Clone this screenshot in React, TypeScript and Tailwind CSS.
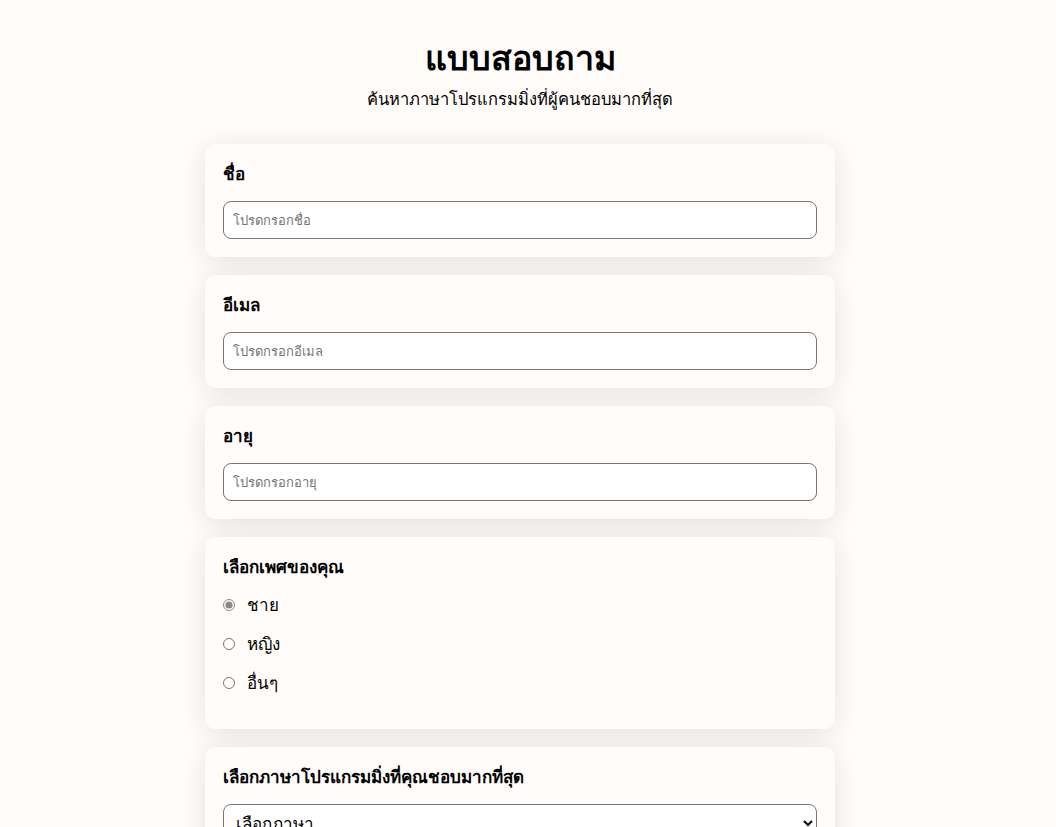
import React from "react";

function Field({ label, placeholder }: { label: string; placeholder: string }) {
  return (
    <div className="rounded-[10px] bg-[#fffcf9] p-[18px] shadow-[0_4px_28px_rgba(0,0,0,0.11)]">
      <label className="block text-[17px] leading-6 font-semibold text-black">{label}</label>
      <input
        type="text"
        placeholder={placeholder}
        className="mt-[15px] block h-[38px] w-full rounded-[8px] border border-[#767676] bg-white px-[9px] text-[13px] text-black placeholder:text-[#757575] outline-none"
      />
    </div>
  );
}

export default function App() {
  return (
    <div className="min-h-screen bg-[#fffcf9] pr-4 font-['Noto_Sans','DejaVu_Sans',sans-serif] text-black">
      <header className="pt-[34px] text-center">
        <h1 className="text-[34px] font-bold leading-[46px]">แบบสอบถาม</h1>
        <p className="mt-[7px] text-[16.5px] leading-6">ค้นหาภาษาโปรแกรมมิ่งที่ผู้คนชอบมากที่สุด</p>
      </header>
      <form className="mx-auto mt-[33px] flex w-[630px] flex-col gap-[18px] pb-10">
        <Field label="ชื่อ" placeholder="โปรดกรอกชื่อ" />
        <Field label="อีเมล" placeholder="โปรดกรอกอีเมล" />
        <Field label="อายุ" placeholder="โปรดกรอกอายุ" />
        <div className="rounded-[10px] bg-[#fffcf9] p-[18px] pb-[34px] shadow-[0_4px_28px_rgba(0,0,0,0.11)]">
          <div className="text-[17px] leading-6 font-semibold">เลือกเพศของคุณ</div>
          {["ชาย", "หญิง", "อื่นๆ"].map((g, i) => (
            <label key={g} className="mt-[15px] flex h-6 items-center text-[17px] first-of-type:mt-[14px]">
              <input
                type="radio"
                name="gender"
                defaultChecked={i === 0}
                className="m-0 h-[12px] w-[12px] accent-[#8a8a8a]"
              />
              <span className="ml-[12px]">{g}</span>
            </label>
          ))}
        </div>
        <div className="rounded-[10px] bg-[#fffcf9] p-[18px] shadow-[0_4px_28px_rgba(0,0,0,0.11)]">
          <div className="text-[17px] leading-6 font-semibold">เลือกภาษาโปรแกรมมิ่งที่คุณชอบมากที่สุด</div>
          <select className="mt-[15px] block h-[38px] w-full rounded-[8px] border border-[#767676] bg-white px-[8px] text-[17px] text-black">
            <option>เลือกภาษา</option>
            <option>JavaScript</option>
            <option>Python</option>
          </select>
        </div>
      </form>
    </div>
  );
}
